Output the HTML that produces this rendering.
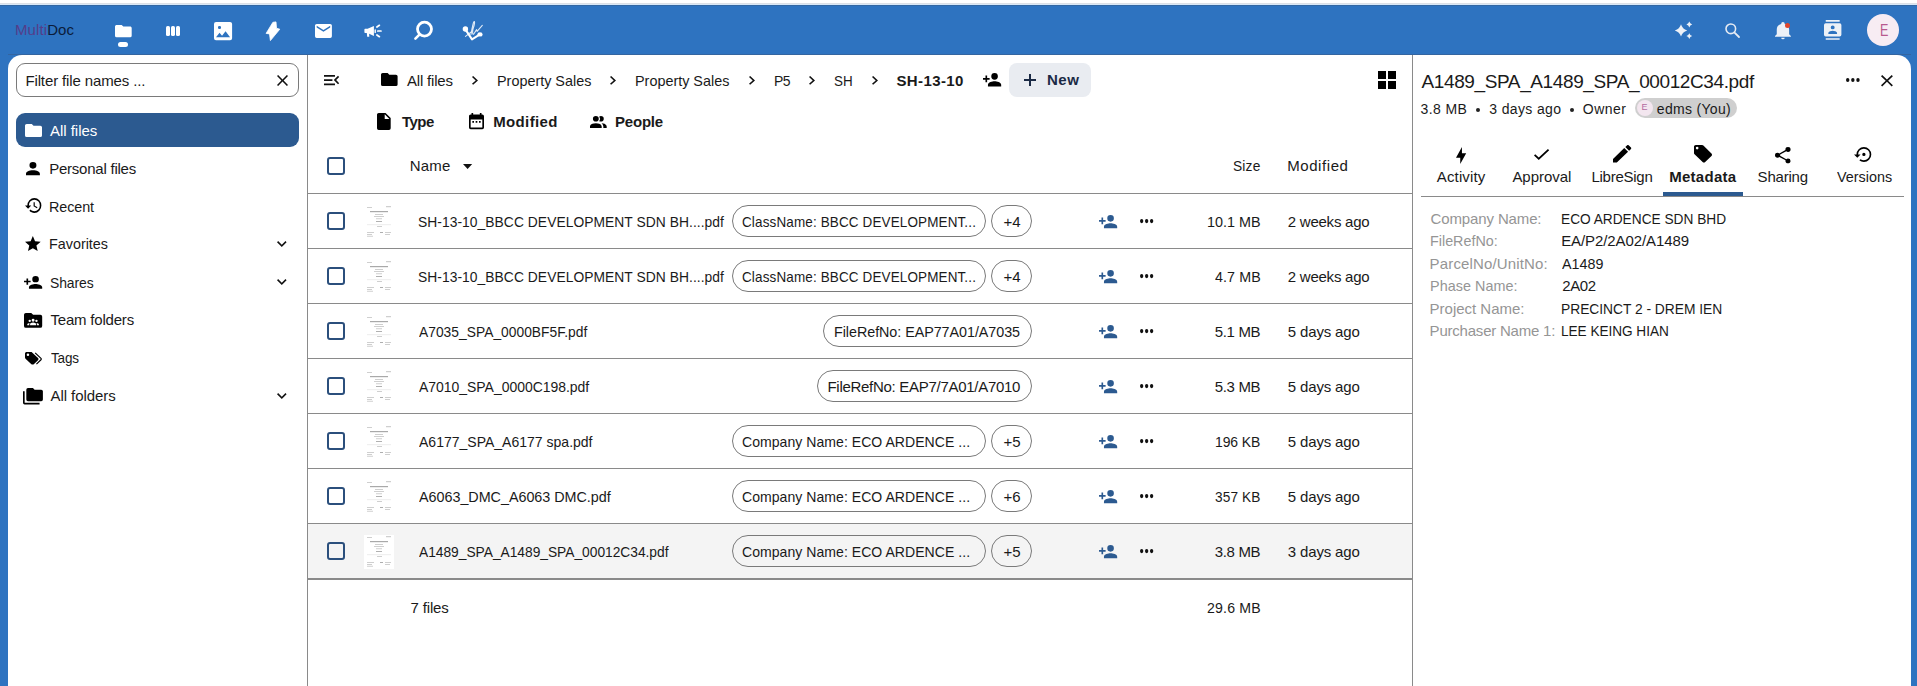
<!DOCTYPE html>
<html><head><meta charset="utf-8"><style>
*{box-sizing:border-box;margin:0;padding:0}
html,body{width:1917px;height:686px;overflow:hidden}
body{background:#2e73c0;font-family:"Liberation Sans",sans-serif;color:#1a1a1a;position:relative;font-size:15px}
.a{position:absolute}
svg{display:block;position:absolute;overflow:visible}
.t{position:absolute;white-space:nowrap;line-height:1}
.thumb i{position:absolute;display:block;height:1px;background:#c8c8c8}
body.measure{background:#fff}
body.measure .a, body.measure svg{visibility:hidden}
body.measure .t{color:#000 !important}
</style></head>
<body>
<div class="a" style="left:0px;top:0px;width:1917px;height:5px;background:#fff"></div>
<div class="a" style="left:0px;top:3px;width:1917px;height:1px;background:#dde0e6"></div>
<div class="a" style="left:0px;top:4px;width:1917px;height:1px;background:#d8e8f8"></div>
<div class="a" style="left:0px;top:5px;width:1917px;height:1px;background:#3367a3"></div>
<div class="a" style="left:8px;top:54px;width:1903px;height:1px;background:#3465a0"></div>
<div class="a" style="left:8px;top:55px;width:1903px;height:645px;background:#fff;border-radius:14px 14px 0 0"></div>
<div class="t" id="logo" style="left:15px;top:22px;font-size:15px;letter-spacing:0.1px"><span style="color:#553d8a">Multi</span><span style="color:#0b1c3a">Doc</span></div>
<svg style="left:114.6px;top:24.8px;width:16.700000000000017px;height:12.3px;fill:#ffffff" viewBox="2 4 20 16" preserveAspectRatio="none"><path d="M10,4H4C2.89,4 2,4.89 2,6V18A2,2 0 0,0 4,20H20A2,2 0 0,0 22,18V8C22,6.89 21.1,6 20,6H12L10,4Z"/></svg>
<div class="a" style="left:117.7px;top:42.3px;width:10.499999999999986px;height:4.700000000000003px;background:#fff;border-radius:3px"></div>
<div class="a" style="left:166px;top:26.2px;width:3.5999999999999943px;height:9.900000000000002px;background:#fff;border-radius:1.6px"></div>
<div class="a" style="left:171px;top:26.2px;width:3.5999999999999943px;height:9.900000000000002px;background:#fff;border-radius:1.6px"></div>
<div class="a" style="left:176px;top:26.2px;width:3.5999999999999943px;height:9.900000000000002px;background:#fff;border-radius:1.6px"></div>
<svg style="left:213.9px;top:22px;width:18.099999999999994px;height:18.299999999999997px;fill:#ffffff" viewBox="3 3 18 18" preserveAspectRatio="none"><path d="M8.5,13.5L11,16.5L14.5,12L19,18H5M21,19V5C21,3.89 20.1,3 19,3H5A2,2 0 0,0 3,5V19A2,2 0 0,0 5,21H19A2,2 0 0,0 21,19Z"/></svg>
<div class="a" style="left:218.3px;top:26px;width:2.5999999999999943px;height:2.6000000000000014px;background:#2e73c0;border-radius:50%"></div>
<svg style="left:0;top:0;width:1px;height:1px;overflow:visible" viewBox="0 0 1 1"><path d="M272.9,22.3L276,21.9L276.5,28.2L279.8,29.2L270.4,40.6L269.5,33.9L266.1,33.4Z" fill="#fff" stroke="#fff" stroke-width="0.8" stroke-linejoin="round"/></svg>
<svg style="left:314.6px;top:24.1px;width:16.899999999999977px;height:13.899999999999999px;fill:#ffffff" viewBox="2 4 20 16" preserveAspectRatio="none"><path d="M20,8L12,13L4,8V6L12,11L20,6M20,4H4C2.89,4 2,4.89 2,6V18A2,2 0 0,0 4,20H20A2,2 0 0,0 22,18V6C22,4.89 21.1,4 20,4Z"/></svg>
<svg style="left:358px;top:18px;width:30px;height:26px" viewBox="0 0 30 26"><path fill="#fff" d="M7.4,10.8H9.6L15.9,7.9V17.9L9.6,15H11.1L11.3,18.8H9.2L8.8,15H7.4C6.7,15 6.4,14.5 6.4,14V11.8C6.4,11.2 6.8,10.8 7.4,10.8Z"/><rect x="16.5" y="11.2" width="1.4" height="3.9" rx=".7" fill="#fff"/><g stroke="#fff" stroke-width="1.7" stroke-linecap="round"><line x1="19.8" y1="13" x2="23" y2="13"/><line x1="18.9" y1="9" x2="21.4" y2="7.3"/><line x1="18.9" y1="17" x2="21.4" y2="18.7"/></g></svg>
<svg style="left:414px;top:21px;width:19px;height:19.3px" viewBox="0 0 19 19.3"><circle cx="10.5" cy="8.1" r="7" fill="none" stroke="#fff" stroke-width="2.8"/><path d="M5.4,13.6L1.4,17.6" stroke="#fff" stroke-width="2.6" stroke-linecap="round"/></svg>
<svg style="left:458px;top:16px;width:30px;height:30px" viewBox="0 0 30 30"><g fill="none" stroke="#fff" stroke-linecap="round" stroke-linejoin="round"><path d="M7.2,13.1L14,23.4L22.3,18.2" stroke-width="2"/><path d="M7.5,20.4L13.2,16" stroke-width="1.1" opacity=".85"/><path d="M13,18.5C13.8,13.5 15.2,6.5 16,5.6C16.9,4.8 16.7,8.2 15.3,12C14.2,15 14.4,18.8 15.6,18.2L18.6,13.6L19.1,15.4L24.3,9.3" stroke-width="1.1" opacity=".85"/></g><circle cx="7.4" cy="13" r="2.7" fill="#fff"/><ellipse cx="22" cy="18.4" rx="2.6" ry="2.2" fill="#fff"/></svg>
<svg style="left:1674.5px;top:21.5px;width:18px;height:18px" viewBox="0 0 18 18" fill="#edf1f7"><path d="M6.00,2.20Q7.36,7.04 12.20,8.40Q7.36,9.76 6.00,14.60Q4.64,9.76 -0.20,8.40Q4.64,7.04 6.00,2.20ZM14.30,-0.40Q14.94,1.86 17.20,2.50Q14.94,3.14 14.30,5.40Q13.66,3.14 11.40,2.50Q13.66,1.86 14.30,-0.40ZM14.30,11.20Q14.94,13.46 17.20,14.10Q14.94,14.74 14.30,17.00Q13.66,14.74 11.40,14.10Q13.66,13.46 14.30,11.20Z"/></svg>
<svg style="left:1725px;top:23px;width:15px;height:14.5px" viewBox="0 0 15 14.5"><circle cx="5.8" cy="5.8" r="4.8" fill="none" stroke="#e6ebf3" stroke-width="1.6"/><path d="M9.3,9.3L14,14" stroke="#e6ebf3" stroke-width="1.8" stroke-linecap="round"/></svg>
<svg style="left:1775.1px;top:21.7px;width:15.900000000000091px;height:17.3px;fill:#edf1f7" viewBox="3 2 18 21" preserveAspectRatio="none"><path d="M21,19V20H3V19L5,17V11C5,7.9 7.03,5.17 10,4.29C10,4.19 10,4.1 10,4A2,2 0 0,1 12,2A2,2 0 0,1 14,4C14,4.1 14,4.19 14,4.29C16.97,5.17 19,7.9 19,11V17L21,19M14,21A2,2 0 0,1 12,23A2,2 0 0,1 10,21"/></svg>
<div class="a" style="left:1785px;top:22.8px;width:5px;height:5.0px;background:#e0452a;border-radius:50%"></div>
<svg style="left:1824.2px;top:19.9px;width:17.399999999999864px;height:19.800000000000004px;fill:#edf1f7" viewBox="2 0 20 24" preserveAspectRatio="none"><path d="M20,0H4V2H20V0M4,24H20V22H4V24M20,4H4A2,2 0 0,0 2,6V18A2,2 0 0,0 4,20H20A2,2 0 0,0 22,18V6A2,2 0 0,0 20,4M12,6.75A2.25,2.25 0 0,1 14.25,9A2.25,2.25 0 0,1 12,11.25A2.25,2.25 0 0,1 9.75,9A2.25,2.25 0 0,1 12,6.75M17,17H7V15.5C7,13.83 10.33,13 12,13C13.67,13 17,13.83 17,15.5V17Z"/></svg>
<div class="a" style="left:1867px;top:14px;width:32px;height:32px;background:#f7ecf3;border-radius:50%"></div>
<div class="t" style="left:1879.6px;top:21.5px;font-size:17px;color:#b8598f;transform:scaleX(0.74);transform-origin:0 0">E</div>
<div class="a" style="left:307px;top:55px;width:1px;height:631px;background:#8a8a8a"></div>
<div class="a" style="left:16px;top:63px;width:283px;height:34px;border:1px solid #7a7a7a;border-radius:9px;background:#fff"></div>
<div class="t" id="t0" style="left:25.40px;top:72.7px;font-size:15px;letter-spacing:-0.120px;">Filter file names ...</div>
<svg style="left:276.5px;top:74.5px;width:11.0px;height:11.0px;fill:#111" viewBox="5 5 14 14" preserveAspectRatio="none"><path d="M19,6.41L17.59,5L12,10.59L6.41,5L5,6.41L10.59,12L5,17.59L6.41,19L12,13.41L17.59,19L19,17.59L13.41,12L19,6.41Z"/></svg>
<div class="a" style="left:16px;top:113px;width:283px;height:34px;background:#2c5a90;border-radius:9px"></div>
<svg style="left:24.5px;top:123.6px;width:17.0px;height:13.099999999999994px;fill:#fff" viewBox="2 4 20 16" preserveAspectRatio="none"><path d="M10,4H4C2.89,4 2,4.89 2,6V18A2,2 0 0,0 4,20H20A2,2 0 0,0 22,18V8C22,6.89 21.1,6 20,6H12L10,4Z"/></svg>
<div class="t" id="t1" style="left:50.10px;top:123px;font-size:15px;color:#fff;letter-spacing:-0.050px;">All files</div>
<svg style="left:25.9px;top:161.5px;width:13.899999999999999px;height:13.300000000000011px;fill:#000" viewBox="4 4 16 16" preserveAspectRatio="none"><path d="M12,4A4,4 0 0,1 16,8A4,4 0 0,1 12,12A4,4 0 0,1 8,8A4,4 0 0,1 12,4M12,14C16.42,14 20,15.79 20,18V20H4V18C4,15.79 7.58,14 12,14Z"/></svg>
<div class="t" id="t2" style="left:49.20px;top:161px;font-size:15px;letter-spacing:-0.231px;">Personal files</div>
<svg style="left:24.6px;top:198.4px;width:16.4px;height:14.900000000000006px;fill:#000" viewBox="1 3 21 18" preserveAspectRatio="none"><path d="M13.5,8H12V13L16.28,15.54L17,14.33L13.5,12.25V8M13,3A9,9 0 0,0 4,12H1L4.96,16.03L9,12H6A7,7 0 0,1 13,5A7,7 0 0,1 20,12A7,7 0 0,1 13,19C11.07,19 9.32,18.21 8.06,16.94L6.64,18.36C8.27,20 10.5,21 13,21A9,9 0 0,0 22,12A9,9 0 0,0 13,3"/></svg>
<div class="t" id="t3" style="left:49.20px;top:198.7px;font-size:15px;letter-spacing:-0.104px;transform:scaleX(0.9587);transform-origin:0 0;">Recent</div>
<svg style="left:24.9px;top:236.2px;width:15.700000000000003px;height:15.100000000000023px;fill:#000" viewBox="2 2 20 19" preserveAspectRatio="none"><path d="M12,17.27L18.18,21L16.54,13.97L22,9.24L14.81,8.62L12,2L9.19,8.62L2,9.24L7.45,13.97L5.82,21L12,17.27Z"/></svg>
<div class="t" id="t4" style="left:49.20px;top:236.4px;font-size:15px;transform:scaleX(0.9567);transform-origin:0 0;">Favorites</div>
<svg style="left:23.9px;top:276px;width:18.200000000000003px;height:12.699999999999989px;fill:#000" viewBox="1 4 22 16" preserveAspectRatio="none"><path d="M15,14C12.33,14 7,15.33 7,18V20H23V18C23,15.33 17.67,14 15,14M6,10V7H4V10H1V12H4V15H6V12H9V10M15,12A4,4 0 0,0 19,8A4,4 0 0,0 15,4A4,4 0 0,0 11,8A4,4 0 0,0 15,12Z"/></svg>
<div class="t" id="t5" style="left:49.50px;top:274.8px;font-size:15px;letter-spacing:-0.109px;transform:scaleX(0.9283);transform-origin:0 0;">Shares</div>
<svg style="left:23.9px;top:312.6px;width:18.200000000000003px;height:14.799999999999955px;fill:#000" viewBox="2 4 20 16" preserveAspectRatio="none"><path d="M20,6H12L10,4H4C2.89,4 2,4.89 2,6V18A2,2 0 0,0 4,20H20A2,2 0 0,0 22,18V8C22,6.89 21.1,6 20,6M12,10.2A1.6,1.6 0 1,1 12,13.4A1.6,1.6 0 1,1 12,10.2M8.3,11.2A1.3,1.3 0 1,1 8.3,13.8A1.3,1.3 0 1,1 8.3,11.2M15.7,11.2A1.3,1.3 0 1,1 15.7,13.8A1.3,1.3 0 1,1 15.7,11.2M12,14.4C13.9,14.4 15.3,15.2 15.3,16.2V17.2H8.7V16.2C8.7,15.2 10.1,14.4 12,14.4M8.3,14.8C8,15.2 7.8,15.7 7.8,16.2V17.2H5.6V16.4C5.6,15.6 6.7,14.9 8.3,14.8M15.7,14.8C17.3,14.9 18.4,15.6 18.4,16.4V17.2H16.2V16.2C16.2,15.7 16,15.2 15.7,14.8Z"/></svg>
<div class="t" id="t6" style="left:50.50px;top:312.2px;font-size:15px;letter-spacing:-0.202px;">Team folders</div>
<svg style="left:24.5px;top:351.7px;width:16.9px;height:12.600000000000023px;fill:#000" viewBox="2 4 20 16" preserveAspectRatio="none"><path d="M5.5,9A1.5,1.5 0 0,0 7,7.5A1.5,1.5 0 0,0 5.5,6A1.5,1.5 0 0,0 4,7.5A1.5,1.5 0 0,0 5.5,9M17.41,11.58C17.77,11.94 18,12.44 18,13C18,13.55 17.78,14.05 17.41,14.41L12.41,19.41C12.05,19.77 11.55,20 11,20C10.45,20 9.95,19.78 9.58,19.41L2.59,12.42C2.22,12.05 2,11.55 2,11V6C2,4.89 2.89,4 4,4H9C9.55,4 10.05,4.22 10.41,4.58L17.41,11.58M13.54,5.71L14.54,4.71L21.41,11.58C21.78,11.94 22,12.45 22,13C22,13.55 21.78,14.05 21.42,14.41L16.04,19.79L15.04,18.79L20.75,13L13.54,5.71Z"/></svg>
<div class="t" id="t7" style="left:50.50px;top:350.3px;font-size:15px;letter-spacing:-0.185px;transform:scaleX(0.9000);transform-origin:0 0;">Tags</div>
<svg style="left:23px;top:388px;width:19.9px;height:16.5px;fill:#000" viewBox="0 2 24 20" preserveAspectRatio="none"><path d="M22,4H14L12,2H6A2,2 0 0,0 4,4V16A2,2 0 0,0 6,18H22A2,2 0 0,0 24,16V6A2,2 0 0,0 22,4M2,6H0V11H0V20A2,2 0 0,0 2,22H20V20H2V6Z"/></svg>
<div class="t" id="t8" style="left:50.50px;top:388.3px;font-size:15px;letter-spacing:-0.060px;">All folders</div>
<svg style="left:277.1px;top:241px;width:9.599999999999966px;height:6px;fill:#111" viewBox="6 8.58 12 7.42" preserveAspectRatio="none"><path d="M7.41,8.58L12,13.17L16.59,8.58L18,10L12,16L6,10L7.41,8.58Z"/></svg>
<svg style="left:277.1px;top:279.2px;width:9.599999999999966px;height:6.0px;fill:#111" viewBox="6 8.58 12 7.42" preserveAspectRatio="none"><path d="M7.41,8.58L12,13.17L16.59,8.58L18,10L12,16L6,10L7.41,8.58Z"/></svg>
<svg style="left:277.1px;top:393.2px;width:9.599999999999966px;height:6.0px;fill:#111" viewBox="6 8.58 12 7.42" preserveAspectRatio="none"><path d="M7.41,8.58L12,13.17L16.59,8.58L18,10L12,16L6,10L7.41,8.58Z"/></svg>
<div class="a" style="left:1412px;top:55px;width:1px;height:631px;background:#8a8a8a"></div>
<div class="a" style="left:308px;top:193px;width:1104px;height:1px;background:#8a8a8a"></div>
<svg style="left:324.2px;top:74.9px;width:15.199999999999989px;height:10.199999999999989px;fill:#111" viewBox="3 6 18 12" preserveAspectRatio="none"><path d="M21,15.61L19.59,17L14.58,12L19.59,7L21,8.39L17.44,12L21,15.61M3,6H16V8H3V6M3,13V11H13V13H3M3,18V16H16V18H3Z"/></svg>
<svg style="left:380.7px;top:73.4px;width:16.600000000000023px;height:13.0px;fill:#000" viewBox="2 4 20 16" preserveAspectRatio="none"><path d="M10,4H4C2.89,4 2,4.89 2,6V18A2,2 0 0,0 4,20H20A2,2 0 0,0 22,18V8C22,6.89 21.1,6 20,6H12L10,4Z"/></svg>
<div class="t" id="t9" style="left:406.90px;top:72.9px;font-size:15px;letter-spacing:-0.172px;">All files</div>
<svg style="left:472.2px;top:75.8px;width:6.0px;height:8.799999999999997px;fill:#111" viewBox="8.59 6 7.41 12" preserveAspectRatio="none"><path d="M8.59,16.58L13.17,12L8.59,7.41L10,6L16,12L10,18L8.59,16.58Z"/></svg>
<svg style="left:610px;top:75.8px;width:6px;height:8.799999999999997px;fill:#111" viewBox="8.59 6 7.41 12" preserveAspectRatio="none"><path d="M8.59,16.58L13.17,12L8.59,7.41L10,6L16,12L10,18L8.59,16.58Z"/></svg>
<svg style="left:749.4px;top:75.8px;width:6.0px;height:8.799999999999997px;fill:#111" viewBox="8.59 6 7.41 12" preserveAspectRatio="none"><path d="M8.59,16.58L13.17,12L8.59,7.41L10,6L16,12L10,18L8.59,16.58Z"/></svg>
<svg style="left:809.2px;top:75.8px;width:6.0px;height:8.799999999999997px;fill:#111" viewBox="8.59 6 7.41 12" preserveAspectRatio="none"><path d="M8.59,16.58L13.17,12L8.59,7.41L10,6L16,12L10,18L8.59,16.58Z"/></svg>
<svg style="left:872.3px;top:75.8px;width:6.0px;height:8.799999999999997px;fill:#111" viewBox="8.59 6 7.41 12" preserveAspectRatio="none"><path d="M8.59,16.58L13.17,12L8.59,7.41L10,6L16,12L10,18L8.59,16.58Z"/></svg>
<div class="t" id="t10" style="left:497.00px;top:72.9px;font-size:15px;transform:scaleX(0.9588);transform-origin:0 0;">Property Sales</div>
<div class="t" id="t11" style="left:635.40px;top:72.9px;font-size:15px;transform:scaleX(0.9588);transform-origin:0 0;">Property Sales</div>
<div class="t" id="t12" style="left:773.80px;top:72.9px;font-size:15px;letter-spacing:-0.536px;transform:scaleX(0.9312);transform-origin:0 0;">P5</div>
<div class="t" id="t13" style="left:833.90px;top:72.9px;font-size:15px;transform:scaleX(0.8947);transform-origin:0 0;">SH</div>
<div class="t" id="t14" style="left:896.40px;top:72.8px;font-size:15px;font-weight:bold;letter-spacing:0.398px;">SH-13-10</div>
<svg style="left:983px;top:73.4px;width:18.200000000000045px;height:13.399999999999991px;fill:#000" viewBox="1 4 22 16" preserveAspectRatio="none"><path d="M15,14C12.33,14 7,15.33 7,18V20H23V18C23,15.33 17.67,14 15,14M6,10V7H4V10H1V12H4V15H6V12H9V10M15,12A4,4 0 0,0 19,8A4,4 0 0,0 15,4A4,4 0 0,0 11,8A4,4 0 0,0 15,12Z"/></svg>
<div class="a" style="left:1009px;top:63px;width:82px;height:34px;background:#e9ecf1;border-radius:8px"></div>
<div class="a" style="left:1024px;top:79px;width:12px;height:2px;background:#1b2a45"></div>
<div class="a" style="left:1029px;top:73.6px;width:2px;height:12.600000000000009px;background:#1b2a45"></div>
<div class="t" id="t15" style="left:1047.00px;top:72px;font-size:15px;font-weight:bold;color:#1b2a45;letter-spacing:0.500px;">New</div>
<svg style="left:1378px;top:70.9px;width:18px;height:17.89999999999999px;fill:#000" viewBox="3 3 18 18" preserveAspectRatio="none"><path d="M3,11H11V3H3M3,21H11V13H3M13,21H21V13H13M13,3V11H21V3"/></svg>
<svg style="left:377.2px;top:113.4px;width:13.699999999999989px;height:17.0px;fill:#000" viewBox="4 2 16 20" preserveAspectRatio="none"><path d="M14,2H6C4.89,2 4,2.89 4,4V20A2,2 0 0,0 6,22H18A2,2 0 0,0 20,20V8L14,2M13,9V3.5L18.5,9H13Z"/></svg>
<div class="t" id="t16" style="left:401.90px;top:113.7px;font-size:15px;font-weight:bold;letter-spacing:-0.465px;">Type</div>
<svg style="left:468.5px;top:113px;width:15.0px;height:16.19999999999999px;fill:#000" viewBox="3 2 18 20" preserveAspectRatio="none"><path d="M19,4H18V2H16V4H8V2H6V4H5C3.89,4 3,4.9 3,6V20A2,2 0 0,0 5,22H19A2,2 0 0,0 21,20V6A2,2 0 0,0 19,4M19,20H5V10H19V20M7,12H9V14H7V12M11,12H13V14H11V12M15,12H17V14H15V12Z"/></svg>
<div class="t" id="t17" style="left:493.20px;top:113.7px;font-size:15px;font-weight:bold;letter-spacing:0.370px;">Modified</div>
<svg style="left:589.5px;top:115.5px;width:16.700000000000045px;height:12.0px;fill:#000" viewBox="2 4 20 15" preserveAspectRatio="none"><path d="M16,17V19H2V17C2,17 2,13 9,13C16,13 16,17 16,17M12.5,7.5A3.5,3.5 0 1,0 9,11A3.5,3.5 0 0,0 12.5,7.5M15.94,13A5.32,5.32 0 0,1 18,17V19H22V17C22,17 22,13.37 15.94,13M15,4A3.39,3.39 0 0,0 13.07,4.59A5,5 0 0,1 13.07,10.41A3.39,3.39 0 0,0 15,11A3.5,3.5 0 0,0 18.5,7.5A3.5,3.5 0 0,0 15,4Z"/></svg>
<div class="t" id="t18" style="left:615.00px;top:113.7px;font-size:15px;font-weight:bold;letter-spacing:-0.200px;">People</div>
<div class="a" style="left:327px;top:157px;width:18px;height:18px;border:2px solid #2b4f7c;border-radius:3px"></div>
<div class="t" id="t19" style="left:409.80px;top:157.7px;font-size:15px;letter-spacing:0.201px;">Name</div>
<svg style="left:462.5px;top:163.5px;width:9.199999999999989px;height:5.0px;fill:#111" viewBox="7 10 10 5" preserveAspectRatio="none"><path d="M7,10L12,15L17,10H7Z"/></svg>
<div class="t" id="t20" style="left:1233.40px;top:157.7px;font-size:15px;letter-spacing:0.181px;transform:scaleX(0.9179);transform-origin:0 0;">Size</div>
<div class="t" id="t21" style="left:1287.20px;top:157.7px;font-size:15px;letter-spacing:0.571px;">Modified</div>
<div class="a" style="left:308px;top:248px;width:1104px;height:1px;background:#8a8a8a"></div>
<div class="a" style="left:327px;top:212px;width:18px;height:18px;border:2px solid #2b4f7c;border-radius:3px"></div>
<svg style="left:364px;top:204.5px;width:30px;height:34px;" viewBox="0 0 30 34"><g fill="#c4c4c4"><rect x="3" y="2" width="5" height="0.8"/><rect x="22" y="1.2" width="5" height="1"/><rect x="6" y="6" width="18" height="1.2" fill="#a9a9a9"/><rect x="11" y="9" width="8" height="0.8"/><rect x="10" y="11.2" width="10" height="0.8"/><rect x="12" y="13.4" width="6" height="0.8"/><rect x="12" y="16" width="6" height="1" fill="#b0b0b0"/><rect x="3" y="19.5" width="24" height="0.6" fill="#e2e2e2"/><rect x="13" y="21" width="5" height="0.8"/><rect x="3" y="27" width="7" height="0.8"/><rect x="3" y="29" width="5" height="0.8"/><rect x="3" y="30.8" width="6" height="0.8"/><rect x="16" y="27" width="3" height="0.8" fill="#9a9a9a"/><rect x="21" y="27" width="6" height="0.8"/><rect x="21" y="29" width="5" height="0.8"/></g></svg>
<div class="t" id="t22" style="left:418.00px;top:214.0px;font-size:15px;letter-spacing:0.057px;transform:scaleX(0.9215);transform-origin:0 0;">SH-13-10_BBCC DEVELOPMENT SDN BH....pdf</div>
<div class="a" style="left:732px;top:205px;width:253.5px;height:32px;border:1px solid #7a7a7a;border-radius:16px"></div>
<div class="a" style="left:991px;top:205px;width:40.59999999999991px;height:32px;border:1px solid #7a7a7a;border-radius:16px"></div>
<div class="t" id="t23" style="left:1003.60px;top:214.0px;font-size:15px;">+4</div>
<div class="t" id="t24" style="left:741.90px;top:214.0px;font-size:15px;letter-spacing:0.153px;transform:scaleX(0.8984);transform-origin:0 0;">ClassName: BBCC DEVELOPMENT...</div>
<svg style="left:1099px;top:215.0px;width:18.200000000000045px;height:13.300000000000011px;fill:#2c5a90" viewBox="1 4 22 16" preserveAspectRatio="none"><path d="M15,14C12.33,14 7,15.33 7,18V20H23V18C23,15.33 17.67,14 15,14M6,10V7H4V10H1V12H4V15H6V12H9V10M15,12A4,4 0 0,0 19,8A4,4 0 0,0 15,4A4,4 0 0,0 11,8A4,4 0 0,0 15,12Z"/></svg>
<svg style="left:1140.3px;top:219.3px;width:13.299999999999955px;height:4.199999999999989px;fill:#111" viewBox="4 10 16 4" preserveAspectRatio="none"><path d="M16,12A2,2 0 0,1 18,10A2,2 0 0,1 20,12A2,2 0 0,1 18,14A2,2 0 0,1 16,12M10,12A2,2 0 0,1 12,10A2,2 0 0,1 14,12A2,2 0 0,1 12,14A2,2 0 0,1 10,12M4,12A2,2 0 0,1 6,10A2,2 0 0,1 8,12A2,2 0 0,1 6,14A2,2 0 0,1 4,12Z"/></svg>
<div class="t" id="t25" style="left:1206.90px;top:214.0px;font-size:15px;letter-spacing:-0.001px;transform:scaleX(0.9593);transform-origin:0 0;">10.1 MB</div>
<div class="t" id="t26" style="left:1287.80px;top:214.0px;font-size:15px;letter-spacing:-0.240px;">2 weeks ago</div>
<div class="a" style="left:308px;top:303px;width:1104px;height:1px;background:#8a8a8a"></div>
<div class="a" style="left:327px;top:267px;width:18px;height:18px;border:2px solid #2b4f7c;border-radius:3px"></div>
<svg style="left:364px;top:259.5px;width:30px;height:34px;" viewBox="0 0 30 34"><g fill="#c4c4c4"><rect x="3" y="2" width="5" height="0.8"/><rect x="22" y="1.2" width="5" height="1"/><rect x="6" y="6" width="18" height="1.2" fill="#a9a9a9"/><rect x="11" y="9" width="8" height="0.8"/><rect x="10" y="11.2" width="10" height="0.8"/><rect x="12" y="13.4" width="6" height="0.8"/><rect x="12" y="16" width="6" height="1" fill="#b0b0b0"/><rect x="3" y="19.5" width="24" height="0.6" fill="#e2e2e2"/><rect x="13" y="21" width="5" height="0.8"/><rect x="3" y="27" width="7" height="0.8"/><rect x="3" y="29" width="5" height="0.8"/><rect x="3" y="30.8" width="6" height="0.8"/><rect x="16" y="27" width="3" height="0.8" fill="#9a9a9a"/><rect x="21" y="27" width="6" height="0.8"/><rect x="21" y="29" width="5" height="0.8"/></g></svg>
<div class="t" id="t27" style="left:418.00px;top:269.0px;font-size:15px;letter-spacing:0.057px;transform:scaleX(0.9215);transform-origin:0 0;">SH-13-10_BBCC DEVELOPMENT SDN BH....pdf</div>
<div class="a" style="left:732px;top:260px;width:253.5px;height:32px;border:1px solid #7a7a7a;border-radius:16px"></div>
<div class="a" style="left:991px;top:260px;width:40.59999999999991px;height:32px;border:1px solid #7a7a7a;border-radius:16px"></div>
<div class="t" id="t28" style="left:1003.60px;top:269.0px;font-size:15px;">+4</div>
<div class="t" id="t29" style="left:741.90px;top:269.0px;font-size:15px;letter-spacing:0.153px;transform:scaleX(0.8984);transform-origin:0 0;">ClassName: BBCC DEVELOPMENT...</div>
<svg style="left:1099px;top:270.0px;width:18.200000000000045px;height:13.300000000000011px;fill:#2c5a90" viewBox="1 4 22 16" preserveAspectRatio="none"><path d="M15,14C12.33,14 7,15.33 7,18V20H23V18C23,15.33 17.67,14 15,14M6,10V7H4V10H1V12H4V15H6V12H9V10M15,12A4,4 0 0,0 19,8A4,4 0 0,0 15,4A4,4 0 0,0 11,8A4,4 0 0,0 15,12Z"/></svg>
<svg style="left:1140.3px;top:274.3px;width:13.299999999999955px;height:4.199999999999989px;fill:#111" viewBox="4 10 16 4" preserveAspectRatio="none"><path d="M16,12A2,2 0 0,1 18,10A2,2 0 0,1 20,12A2,2 0 0,1 18,14A2,2 0 0,1 16,12M10,12A2,2 0 0,1 12,10A2,2 0 0,1 14,12A2,2 0 0,1 12,14A2,2 0 0,1 10,12M4,12A2,2 0 0,1 6,10A2,2 0 0,1 8,12A2,2 0 0,1 6,14A2,2 0 0,1 4,12Z"/></svg>
<div class="t" id="t30" style="left:1214.60px;top:269.0px;font-size:15px;letter-spacing:0.105px;transform:scaleX(0.9511);transform-origin:0 0;">4.7 MB</div>
<div class="t" id="t31" style="left:1287.80px;top:269.0px;font-size:15px;letter-spacing:-0.240px;">2 weeks ago</div>
<div class="a" style="left:308px;top:358px;width:1104px;height:1px;background:#8a8a8a"></div>
<div class="a" style="left:327px;top:322px;width:18px;height:18px;border:2px solid #2b4f7c;border-radius:3px"></div>
<svg style="left:364px;top:314.5px;width:30px;height:34px;" viewBox="0 0 30 34"><g fill="#c4c4c4"><rect x="3" y="2" width="5" height="0.8"/><rect x="22" y="1.2" width="5" height="1"/><rect x="6" y="6" width="18" height="1.2" fill="#a9a9a9"/><rect x="11" y="9" width="8" height="0.8"/><rect x="10" y="11.2" width="10" height="0.8"/><rect x="12" y="13.4" width="6" height="0.8"/><rect x="12" y="16" width="6" height="1" fill="#b0b0b0"/><rect x="3" y="19.5" width="24" height="0.6" fill="#e2e2e2"/><rect x="13" y="21" width="5" height="0.8"/><rect x="3" y="27" width="7" height="0.8"/><rect x="3" y="29" width="5" height="0.8"/><rect x="3" y="30.8" width="6" height="0.8"/><rect x="16" y="27" width="3" height="0.8" fill="#9a9a9a"/><rect x="21" y="27" width="6" height="0.8"/><rect x="21" y="29" width="5" height="0.8"/></g></svg>
<div class="t" id="t32" style="left:419.00px;top:324.0px;font-size:15px;letter-spacing:0.028px;transform:scaleX(0.9197);transform-origin:0 0;">A7035_SPA_0000BF5F.pdf</div>
<div class="a" style="left:823px;top:315px;width:208.5px;height:32px;border:1px solid #7a7a7a;border-radius:16px"></div>
<div class="t" id="t33" style="left:833.50px;top:324.0px;font-size:15px;letter-spacing:-0.043px;transform:scaleX(0.9546);transform-origin:0 0;">FileRefNo: EAP77A01/A7035</div>
<svg style="left:1099px;top:325.0px;width:18.200000000000045px;height:13.300000000000011px;fill:#2c5a90" viewBox="1 4 22 16" preserveAspectRatio="none"><path d="M15,14C12.33,14 7,15.33 7,18V20H23V18C23,15.33 17.67,14 15,14M6,10V7H4V10H1V12H4V15H6V12H9V10M15,12A4,4 0 0,0 19,8A4,4 0 0,0 15,4A4,4 0 0,0 11,8A4,4 0 0,0 15,12Z"/></svg>
<svg style="left:1140.3px;top:329.3px;width:13.299999999999955px;height:4.199999999999989px;fill:#111" viewBox="4 10 16 4" preserveAspectRatio="none"><path d="M16,12A2,2 0 0,1 18,10A2,2 0 0,1 20,12A2,2 0 0,1 18,14A2,2 0 0,1 16,12M10,12A2,2 0 0,1 12,10A2,2 0 0,1 14,12A2,2 0 0,1 12,14A2,2 0 0,1 10,12M4,12A2,2 0 0,1 6,10A2,2 0 0,1 8,12A2,2 0 0,1 6,14A2,2 0 0,1 4,12Z"/></svg>
<div class="t" id="t34" style="left:1214.70px;top:324.0px;font-size:15px;letter-spacing:-0.320px;">5.1 MB</div>
<div class="t" id="t35" style="left:1287.80px;top:324.0px;font-size:15px;letter-spacing:-0.154px;">5 days ago</div>
<div class="a" style="left:308px;top:413px;width:1104px;height:1px;background:#8a8a8a"></div>
<div class="a" style="left:327px;top:377px;width:18px;height:18px;border:2px solid #2b4f7c;border-radius:3px"></div>
<svg style="left:364px;top:369.5px;width:30px;height:34px;" viewBox="0 0 30 34"><g fill="#c4c4c4"><rect x="3" y="2" width="5" height="0.8"/><rect x="22" y="1.2" width="5" height="1"/><rect x="6" y="6" width="18" height="1.2" fill="#a9a9a9"/><rect x="11" y="9" width="8" height="0.8"/><rect x="10" y="11.2" width="10" height="0.8"/><rect x="12" y="13.4" width="6" height="0.8"/><rect x="12" y="16" width="6" height="1" fill="#b0b0b0"/><rect x="3" y="19.5" width="24" height="0.6" fill="#e2e2e2"/><rect x="13" y="21" width="5" height="0.8"/><rect x="3" y="27" width="7" height="0.8"/><rect x="3" y="29" width="5" height="0.8"/><rect x="3" y="30.8" width="6" height="0.8"/><rect x="16" y="27" width="3" height="0.8" fill="#9a9a9a"/><rect x="21" y="27" width="6" height="0.8"/><rect x="21" y="29" width="5" height="0.8"/></g></svg>
<div class="t" id="t36" style="left:419.00px;top:379.0px;font-size:15px;letter-spacing:-0.026px;transform:scaleX(0.9317);transform-origin:0 0;">A7010_SPA_0000C198.pdf</div>
<div class="a" style="left:817px;top:370px;width:214.5px;height:32px;border:1px solid #7a7a7a;border-radius:16px"></div>
<div class="t" id="t37" style="left:827.50px;top:379.0px;font-size:15px;letter-spacing:-0.288px;">FileRefNo: EAP7/7A01/A7010</div>
<svg style="left:1099px;top:380.0px;width:18.200000000000045px;height:13.300000000000011px;fill:#2c5a90" viewBox="1 4 22 16" preserveAspectRatio="none"><path d="M15,14C12.33,14 7,15.33 7,18V20H23V18C23,15.33 17.67,14 15,14M6,10V7H4V10H1V12H4V15H6V12H9V10M15,12A4,4 0 0,0 19,8A4,4 0 0,0 15,4A4,4 0 0,0 11,8A4,4 0 0,0 15,12Z"/></svg>
<svg style="left:1140.3px;top:384.3px;width:13.299999999999955px;height:4.199999999999989px;fill:#111" viewBox="4 10 16 4" preserveAspectRatio="none"><path d="M16,12A2,2 0 0,1 18,10A2,2 0 0,1 20,12A2,2 0 0,1 18,14A2,2 0 0,1 16,12M10,12A2,2 0 0,1 12,10A2,2 0 0,1 14,12A2,2 0 0,1 12,14A2,2 0 0,1 10,12M4,12A2,2 0 0,1 6,10A2,2 0 0,1 8,12A2,2 0 0,1 6,14A2,2 0 0,1 4,12Z"/></svg>
<div class="t" id="t38" style="left:1214.70px;top:379.0px;font-size:15px;letter-spacing:-0.320px;">5.3 MB</div>
<div class="t" id="t39" style="left:1287.80px;top:379.0px;font-size:15px;letter-spacing:-0.154px;">5 days ago</div>
<div class="a" style="left:308px;top:468px;width:1104px;height:1px;background:#8a8a8a"></div>
<div class="a" style="left:327px;top:432px;width:18px;height:18px;border:2px solid #2b4f7c;border-radius:3px"></div>
<svg style="left:364px;top:424.5px;width:30px;height:34px;" viewBox="0 0 30 34"><g fill="#c4c4c4"><rect x="3" y="2" width="5" height="0.8"/><rect x="22" y="1.2" width="5" height="1"/><rect x="6" y="6" width="18" height="1.2" fill="#a9a9a9"/><rect x="11" y="9" width="8" height="0.8"/><rect x="10" y="11.2" width="10" height="0.8"/><rect x="12" y="13.4" width="6" height="0.8"/><rect x="12" y="16" width="6" height="1" fill="#b0b0b0"/><rect x="3" y="19.5" width="24" height="0.6" fill="#e2e2e2"/><rect x="13" y="21" width="5" height="0.8"/><rect x="3" y="27" width="7" height="0.8"/><rect x="3" y="29" width="5" height="0.8"/><rect x="3" y="30.8" width="6" height="0.8"/><rect x="16" y="27" width="3" height="0.8" fill="#9a9a9a"/><rect x="21" y="27" width="6" height="0.8"/><rect x="21" y="29" width="5" height="0.8"/></g></svg>
<div class="t" id="t40" style="left:419.00px;top:434.0px;font-size:15px;letter-spacing:-0.001px;transform:scaleX(0.9344);transform-origin:0 0;">A6177_SPA_A6177 spa.pdf</div>
<div class="a" style="left:732px;top:425px;width:253.5px;height:32px;border:1px solid #7a7a7a;border-radius:16px"></div>
<div class="a" style="left:991px;top:425px;width:40.59999999999991px;height:32px;border:1px solid #7a7a7a;border-radius:16px"></div>
<div class="t" id="t41" style="left:1003.60px;top:434.0px;font-size:15px;">+5</div>
<div class="t" id="t42" style="left:741.90px;top:434.0px;font-size:15px;letter-spacing:0.039px;transform:scaleX(0.9361);transform-origin:0 0;">Company Name: ECO ARDENCE ...</div>
<svg style="left:1099px;top:435.0px;width:18.200000000000045px;height:13.300000000000011px;fill:#2c5a90" viewBox="1 4 22 16" preserveAspectRatio="none"><path d="M15,14C12.33,14 7,15.33 7,18V20H23V18C23,15.33 17.67,14 15,14M6,10V7H4V10H1V12H4V15H6V12H9V10M15,12A4,4 0 0,0 19,8A4,4 0 0,0 15,4A4,4 0 0,0 11,8A4,4 0 0,0 15,12Z"/></svg>
<svg style="left:1140.3px;top:439.3px;width:13.299999999999955px;height:4.199999999999989px;fill:#111" viewBox="4 10 16 4" preserveAspectRatio="none"><path d="M16,12A2,2 0 0,1 18,10A2,2 0 0,1 20,12A2,2 0 0,1 18,14A2,2 0 0,1 16,12M10,12A2,2 0 0,1 12,10A2,2 0 0,1 14,12A2,2 0 0,1 12,14A2,2 0 0,1 10,12M4,12A2,2 0 0,1 6,10A2,2 0 0,1 8,12A2,2 0 0,1 6,14A2,2 0 0,1 4,12Z"/></svg>
<div class="t" id="t43" style="left:1214.60px;top:434.0px;font-size:15px;letter-spacing:-0.109px;transform:scaleX(0.9298);transform-origin:0 0;">196 KB</div>
<div class="t" id="t44" style="left:1287.80px;top:434.0px;font-size:15px;letter-spacing:-0.154px;">5 days ago</div>
<div class="a" style="left:308px;top:523px;width:1104px;height:1px;background:#8a8a8a"></div>
<div class="a" style="left:327px;top:487px;width:18px;height:18px;border:2px solid #2b4f7c;border-radius:3px"></div>
<svg style="left:364px;top:479.5px;width:30px;height:34px;" viewBox="0 0 30 34"><g fill="#c4c4c4"><rect x="3" y="2" width="5" height="0.8"/><rect x="22" y="1.2" width="5" height="1"/><rect x="6" y="6" width="18" height="1.2" fill="#a9a9a9"/><rect x="11" y="9" width="8" height="0.8"/><rect x="10" y="11.2" width="10" height="0.8"/><rect x="12" y="13.4" width="6" height="0.8"/><rect x="12" y="16" width="6" height="1" fill="#b0b0b0"/><rect x="3" y="19.5" width="24" height="0.6" fill="#e2e2e2"/><rect x="13" y="21" width="5" height="0.8"/><rect x="3" y="27" width="7" height="0.8"/><rect x="3" y="29" width="5" height="0.8"/><rect x="3" y="30.8" width="6" height="0.8"/><rect x="16" y="27" width="3" height="0.8" fill="#9a9a9a"/><rect x="21" y="27" width="6" height="0.8"/><rect x="21" y="29" width="5" height="0.8"/></g></svg>
<div class="t" id="t45" style="left:419.00px;top:489.0px;font-size:15px;letter-spacing:-0.024px;transform:scaleX(0.9567);transform-origin:0 0;">A6063_DMC_A6063 DMC.pdf</div>
<div class="a" style="left:732px;top:480px;width:253.5px;height:32px;border:1px solid #7a7a7a;border-radius:16px"></div>
<div class="a" style="left:991px;top:480px;width:40.59999999999991px;height:32px;border:1px solid #7a7a7a;border-radius:16px"></div>
<div class="t" id="t46" style="left:1003.60px;top:489.0px;font-size:15px;">+6</div>
<div class="t" id="t47" style="left:741.90px;top:489.0px;font-size:15px;letter-spacing:0.039px;transform:scaleX(0.9361);transform-origin:0 0;">Company Name: ECO ARDENCE ...</div>
<svg style="left:1099px;top:490.0px;width:18.200000000000045px;height:13.300000000000011px;fill:#2c5a90" viewBox="1 4 22 16" preserveAspectRatio="none"><path d="M15,14C12.33,14 7,15.33 7,18V20H23V18C23,15.33 17.67,14 15,14M6,10V7H4V10H1V12H4V15H6V12H9V10M15,12A4,4 0 0,0 19,8A4,4 0 0,0 15,4A4,4 0 0,0 11,8A4,4 0 0,0 15,12Z"/></svg>
<svg style="left:1140.3px;top:494.3px;width:13.299999999999955px;height:4.199999999999989px;fill:#111" viewBox="4 10 16 4" preserveAspectRatio="none"><path d="M16,12A2,2 0 0,1 18,10A2,2 0 0,1 20,12A2,2 0 0,1 18,14A2,2 0 0,1 16,12M10,12A2,2 0 0,1 12,10A2,2 0 0,1 14,12A2,2 0 0,1 12,14A2,2 0 0,1 10,12M4,12A2,2 0 0,1 6,10A2,2 0 0,1 8,12A2,2 0 0,1 6,14A2,2 0 0,1 4,12Z"/></svg>
<div class="t" id="t48" style="left:1214.60px;top:489.0px;font-size:15px;letter-spacing:0.110px;transform:scaleX(0.9104);transform-origin:0 0;">357 KB</div>
<div class="t" id="t49" style="left:1287.80px;top:489.0px;font-size:15px;letter-spacing:-0.154px;">5 days ago</div>
<div class="a" style="left:308px;top:524px;width:1104px;height:55px;background:#f4f4f4"></div>
<div class="a" style="left:327px;top:542px;width:18px;height:18px;border:2px solid #2b4f7c;border-radius:3px"></div>
<svg style="left:364px;top:534.5px;width:30px;height:34px;background:#fff;" viewBox="0 0 30 34"><g fill="#c4c4c4"><rect x="3" y="2" width="5" height="0.8"/><rect x="22" y="1.2" width="5" height="1"/><rect x="6" y="6" width="18" height="1.2" fill="#a9a9a9"/><rect x="11" y="9" width="8" height="0.8"/><rect x="10" y="11.2" width="10" height="0.8"/><rect x="12" y="13.4" width="6" height="0.8"/><rect x="12" y="16" width="6" height="1" fill="#b0b0b0"/><rect x="3" y="19.5" width="24" height="0.6" fill="#e2e2e2"/><rect x="13" y="21" width="5" height="0.8"/><rect x="3" y="27" width="7" height="0.8"/><rect x="3" y="29" width="5" height="0.8"/><rect x="3" y="30.8" width="6" height="0.8"/><rect x="16" y="27" width="3" height="0.8" fill="#9a9a9a"/><rect x="21" y="27" width="6" height="0.8"/><rect x="21" y="29" width="5" height="0.8"/></g></svg>
<div class="t" id="t50" style="left:419.00px;top:544.0px;font-size:15px;letter-spacing:-0.020px;transform:scaleX(0.9187);transform-origin:0 0;">A1489_SPA_A1489_SPA_00012C34.pdf</div>
<div class="a" style="left:732px;top:535px;width:253.5px;height:32px;border:1px solid #7a7a7a;border-radius:16px"></div>
<div class="a" style="left:991px;top:535px;width:40.59999999999991px;height:32px;border:1px solid #7a7a7a;border-radius:16px"></div>
<div class="t" id="t51" style="left:1003.60px;top:544.0px;font-size:15px;">+5</div>
<div class="t" id="t52" style="left:741.90px;top:544.0px;font-size:15px;letter-spacing:0.039px;transform:scaleX(0.9361);transform-origin:0 0;">Company Name: ECO ARDENCE ...</div>
<svg style="left:1099px;top:545.0px;width:18.200000000000045px;height:13.299999999999955px;fill:#2c5a90" viewBox="1 4 22 16" preserveAspectRatio="none"><path d="M15,14C12.33,14 7,15.33 7,18V20H23V18C23,15.33 17.67,14 15,14M6,10V7H4V10H1V12H4V15H6V12H9V10M15,12A4,4 0 0,0 19,8A4,4 0 0,0 15,4A4,4 0 0,0 11,8A4,4 0 0,0 15,12Z"/></svg>
<svg style="left:1140.3px;top:549.3px;width:13.299999999999955px;height:4.2000000000000455px;fill:#111" viewBox="4 10 16 4" preserveAspectRatio="none"><path d="M16,12A2,2 0 0,1 18,10A2,2 0 0,1 20,12A2,2 0 0,1 18,14A2,2 0 0,1 16,12M10,12A2,2 0 0,1 12,10A2,2 0 0,1 14,12A2,2 0 0,1 12,14A2,2 0 0,1 10,12M4,12A2,2 0 0,1 6,10A2,2 0 0,1 8,12A2,2 0 0,1 6,14A2,2 0 0,1 4,12Z"/></svg>
<div class="t" id="t53" style="left:1214.70px;top:544.0px;font-size:15px;letter-spacing:-0.320px;">3.8 MB</div>
<div class="t" id="t54" style="left:1287.80px;top:544.0px;font-size:15px;letter-spacing:-0.154px;">3 days ago</div>
<div class="a" style="left:308px;top:578px;width:1104px;height:2px;background:#8a8a8a"></div>
<div class="t" id="t55" style="left:410.60px;top:599.6px;font-size:15px;letter-spacing:-0.167px;">7 files</div>
<div class="t" id="t56" style="left:1206.90px;top:599.6px;font-size:15px;letter-spacing:0.179px;transform:scaleX(0.9418);transform-origin:0 0;">29.6 MB</div>
<div class="t" id="t57" style="left:1421.50px;top:71.9px;font-size:19px;letter-spacing:-0.387px;">A1489_SPA_A1489_SPA_00012C34.pdf</div>
<svg style="left:1845.9px;top:78px;width:13.699999999999818px;height:4px;fill:#111" viewBox="4 10 16 4" preserveAspectRatio="none"><path d="M16,12A2,2 0 0,1 18,10A2,2 0 0,1 20,12A2,2 0 0,1 18,14A2,2 0 0,1 16,12M10,12A2,2 0 0,1 12,10A2,2 0 0,1 14,12A2,2 0 0,1 12,14A2,2 0 0,1 10,12M4,12A2,2 0 0,1 6,10A2,2 0 0,1 8,12A2,2 0 0,1 6,14A2,2 0 0,1 4,12Z"/></svg>
<svg style="left:1880.8px;top:74.8px;width:11.900000000000091px;height:11.400000000000006px;fill:#111" viewBox="5 5 14 14" preserveAspectRatio="none"><path d="M19,6.41L17.59,5L12,10.59L6.41,5L5,6.41L10.59,12L5,17.59L6.41,19L12,13.41L17.59,19L19,17.59L13.41,12L19,6.41Z"/></svg>
<div class="t" id="t58" style="left:1420.50px;top:102.2px;font-size:14px;letter-spacing:0.400px;">3.8 MB</div>
<div class="a" style="left:1476px;top:108px;width:4px;height:4px;background:#222;border-radius:50%"></div>
<div class="t" id="t59" style="left:1489.30px;top:102.2px;font-size:14px;letter-spacing:0.355px;">3 days ago</div>
<div class="a" style="left:1569.5px;top:108px;width:4.0px;height:4px;background:#222;border-radius:50%"></div>
<div class="t" id="t60" style="left:1582.80px;top:102.2px;font-size:14px;letter-spacing:0.500px;">Owner</div>
<div class="a" style="left:1635.3px;top:98.2px;width:102.0px;height:19.5px;background:#cfcfcf;border-radius:10px"></div>
<div class="a" style="left:1636.5px;top:99.5px;width:16.5px;height:16.5px;background:#f3e6ef;border-radius:50%"></div>
<div class="t" style="left:1641.5px;top:103px;font-size:9px;color:#b46aa0">E</div>
<div class="t" id="t61" style="left:1656.80px;top:102.2px;font-size:14px;letter-spacing:0.310px;">edms (You)</div>
<svg style="left:1455.9px;top:146.5px;width:10.199999999999818px;height:17.0px;fill:#000" viewBox="6 1 12 22" preserveAspectRatio="none"><path d="M11,15H6L13,1V9H18L11,23V15Z"/></svg>
<div class="t" id="t62" style="left:1436.80px;top:168.8px;font-size:15px;letter-spacing:0.143px;">Activity</div>
<svg style="left:1534.3px;top:149.2px;width:15.200000000000045px;height:10.900000000000006px;fill:#000" viewBox="3.5 5.59 17.5 13.41" preserveAspectRatio="none"><path d="M21,7L9,19L3.5,13.5L4.91,12.09L9,16.17L19.59,5.59L21,7Z"/></svg>
<div class="t" id="t63" style="left:1512.40px;top:168.8px;font-size:15px;letter-spacing:-0.031px;">Approval</div>
<svg style="left:1612.6px;top:145.2px;width:18.300000000000182px;height:17.600000000000023px;fill:#000" viewBox="3 3 18 18" preserveAspectRatio="none"><path d="M20.71,7.04C21.1,6.65 21.1,6 20.71,5.63L18.37,3.29C18,2.9 17.35,2.9 16.96,3.29L15.12,5.12L18.87,8.87M3,17.25V21H6.75L17.81,9.93L14.06,6.18L3,17.25Z"/></svg>
<div class="t" id="t64" style="left:1591.40px;top:168.8px;font-size:15px;letter-spacing:-0.250px;">LibreSign</div>
<svg style="left:1694px;top:145.2px;width:18px;height:17.600000000000023px;fill:#000" viewBox="2 2 20 20" preserveAspectRatio="none"><path d="M5.5,7A1.5,1.5 0 0,1 4,5.5A1.5,1.5 0 0,1 5.5,4A1.5,1.5 0 0,1 7,5.5A1.5,1.5 0 0,1 5.5,7M21.41,11.58L12.41,2.58C12.05,2.22 11.55,2 11,2H4C2.89,2 2,2.89 2,4V11C2,11.55 2.22,12.05 2.59,12.41L11.58,21.41C11.95,21.77 12.45,22 13,22C13.55,22 14.05,21.77 14.41,21.41L21.41,14.41C21.78,14.05 22,13.55 22,13C22,12.44 21.77,11.94 21.41,11.58Z"/></svg>
<div class="t" id="t65" style="left:1669.20px;top:168.8px;font-size:15px;font-weight:bold;letter-spacing:0.285px;">Metadata</div>
<svg style="left:1775px;top:146.5px;width:15.599999999999909px;height:16.30000000000001px;fill:#000" viewBox="3 2 18 19.91" preserveAspectRatio="none"><path d="M18,16.08C17.24,16.08 16.56,16.38 16.04,16.85L8.91,12.7C8.96,12.47 9,12.24 9,12C9,11.76 8.96,11.53 8.91,11.3L15.96,7.19C16.5,7.69 17.21,8 18,8A3,3 0 0,0 21,5A3,3 0 0,0 18,2A3,3 0 0,0 15,5C15,5.24 15.04,5.47 15.09,5.7L8.04,9.81C7.5,9.31 6.79,9 6,9A3,3 0 0,0 3,12A3,3 0 0,0 6,15C6.79,15 7.5,14.69 8.04,14.19L15.16,18.34C15.11,18.55 15.08,18.77 15.08,19C15.08,20.61 16.39,21.91 18,21.91C19.61,21.91 20.92,20.61 20.92,19A2.92,2.92 0 0,0 18,16.08Z"/></svg>
<div class="t" id="t66" style="left:1757.60px;top:168.8px;font-size:15px;letter-spacing:-0.200px;">Sharing</div>
<svg style="left:1854.4px;top:147.2px;width:17.299999999999955px;height:14.900000000000006px;fill:#000" viewBox="0 3 21 18" preserveAspectRatio="none"><path d="M12,3A9,9 0 0,0 3,12H0L4,16L8,12H5A7,7 0 0,1 12,5A7,7 0 0,1 19,12A7,7 0 0,1 12,19C10.5,19 9.09,18.5 7.94,17.7L6.5,19.14C8.04,20.3 9.94,21 12,21A9,9 0 0,0 21,12A9,9 0 0,0 12,3M14,12A2,2 0 0,0 12,10A2,2 0 0,0 10,12A2,2 0 0,0 12,14A2,2 0 0,0 14,12Z"/></svg>
<div class="t" id="t67" style="left:1836.90px;top:168.8px;font-size:15px;letter-spacing:-0.002px;transform:scaleX(0.9579);transform-origin:0 0;">Versions</div>
<div class="a" style="left:1421px;top:196px;width:483px;height:1px;background:#8a8a8a"></div>
<div class="a" style="left:1663px;top:192px;width:80px;height:4px;background:#2c5a90"></div>
<div class="t" id="t68" style="left:1430.60px;top:210.8px;font-size:15px;color:#959595;letter-spacing:-0.134px;">Company Name:</div>
<div class="t" id="t69" style="left:1561.20px;top:210.8px;font-size:15px;letter-spacing:-0.002px;transform:scaleX(0.9128);transform-origin:0 0;">ECO ARDENCE SDN BHD</div>
<div class="t" id="t70" style="left:1429.60px;top:233.3px;font-size:15px;color:#959595;transform:scaleX(0.9565);transform-origin:0 0;">FileRefNo:</div>
<div class="t" id="t71" style="left:1561.20px;top:233.3px;font-size:15px;letter-spacing:-0.093px;">EA/P2/2A02/A1489</div>
<div class="t" id="t72" style="left:1429.60px;top:255.8px;font-size:15px;color:#959595;letter-spacing:0.147px;">ParcelNo/UnitNo:</div>
<div class="t" id="t73" style="left:1562.20px;top:255.8px;font-size:15px;transform:scaleX(0.9535);transform-origin:0 0;">A1489</div>
<div class="t" id="t74" style="left:1429.60px;top:278.3px;font-size:15px;color:#959595;letter-spacing:0.051px;transform:scaleX(0.9584);transform-origin:0 0;">Phase Name:</div>
<div class="t" id="t75" style="left:1562.20px;top:278.3px;font-size:15px;letter-spacing:-0.401px;">2A02</div>
<div class="t" id="t76" style="left:1429.60px;top:300.8px;font-size:15px;color:#959595;letter-spacing:-0.017px;">Project Name:</div>
<div class="t" id="t77" style="left:1561.20px;top:300.8px;font-size:15px;letter-spacing:-0.028px;transform:scaleX(0.9208);transform-origin:0 0;">PRECINCT 2 - DREM IEN</div>
<div class="t" id="t78" style="left:1429.60px;top:323.3px;font-size:15px;color:#959595;letter-spacing:-0.213px;">Purchaser Name 1:</div>
<div class="t" id="t79" style="left:1561.20px;top:323.3px;font-size:15px;letter-spacing:-0.043px;transform:scaleX(0.9085);transform-origin:0 0;">LEE KEING HIAN</div>
</body></html>
